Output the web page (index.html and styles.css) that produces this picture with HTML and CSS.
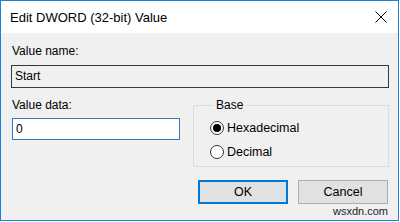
FILE: index.html
```html
<!DOCTYPE html>
<html>
<head>
    <meta charset="utf-8" />
    <title>Edit DWORD (32-bit) Value</title>
    <link rel="stylesheet" href="styles.css">
</head>
<body>
    <div class="window">
        <div class="titlebar">
            <span class="title">Edit DWORD (32-bit) Value</span>
            <svg class="close" width="12" height="12" viewBox="0 0 12 12">
                <path d="M0.5 0.5 L11.5 11.5 M11.5 0.5 L0.5 11.5" stroke="#000" stroke-width="1" fill="none" />
            </svg>
        </div>
        <div class="content">
            <div class="label">Value name:</div>
            <div class="name-field">Start</div>
            <div class="row">
                <div class="left">
                    <div class="label label2">Value data:</div>
                    <div class="data-field">0</div>
                </div>
                <fieldset class="base">
                    <legend>Base</legend>
                    <div class="radio-row">
                        <span class="radio checked"></span>
                        <span>Hexadecimal</span>
                    </div>
                    <div class="radio-row">
                        <span class="radio"></span>
                        <span>Decimal</span>
                    </div>
                </fieldset>
            </div>
            <div class="buttons">
                <div class="btn btn-ok">OK</div>
                <div class="btn">Cancel</div>
            </div>
            <div class="mark">wsxdn.com</div>
        </div>
    </div>
</body>
</html>
```

FILE: styles.css
```css
body {
    margin: 0;
    font-family: "Liberation Sans", Arial, sans-serif;
    font-size: 12px;
    color: #000;
    background: #fff;
}

.window {
    width: 399px;
    height: 221px;
    box-sizing: border-box;
    border: 1px solid #1883d7;
    display: flex;
    flex-direction: column;
    background: #f0f0f0;
}

.titlebar {
    height: 32px;
    background: #fff;
    display: flex;
    align-items: center;
    padding-left: 9px;
    padding-right: 11px;
}

.title {
    font-size: 13px;
    flex: 1;
}

.close {
    display: block;
}

.content {
    flex: 1;
    padding: 0 9px 0 10px;
}

.label {
    line-height: 15px;
    margin: 11px 0 0 1px;
}

.name-field {
    margin-top: 6px;
    height: 23px;
    box-sizing: border-box;
    border: 1px solid #3a3a3a;
    background: #f0f0f0;
    padding-left: 3px;
    line-height: 21px;
}

.row {
    display: grid;
    grid-template-columns: 182px 1fr;
}

.label2 {
    margin-top: 10px;
}

.data-field {
    margin: 5px 0 0 1px;
    width: 168px;
    height: 22px;
    box-sizing: border-box;
    border: 1px solid #2a7ac4;
    background: #fff;
    padding-left: 3px;
    line-height: 20px;
}

.base {
    margin: 10px 0 0 0;
    padding: 3px 0 0 16px;
    border: 1px solid #dcdcdc;
    height: 69px;
    box-sizing: border-box;
    min-width: 0;
}

.base legend {
    padding: 0 2px;
    margin-left: 4px;
    line-height: 15px;
}

.radio-row {
    display: flex;
    align-items: center;
    height: 24px;
    gap: 3px;
    font-size: 12.5px;
}

.radio {
    width: 14px;
    height: 14px;
    box-sizing: border-box;
    border: 1px solid #333;
    border-radius: 50%;
    background: #fff;
    position: relative;
}

.radio.checked::after {
    content: "";
    position: absolute;
    left: 2px;
    top: 2px;
    width: 8px;
    height: 8px;
    border-radius: 50%;
    background: #000;
}

.buttons {
    display: flex;
    justify-content: flex-end;
    gap: 10px;
    margin: 13px 1px 0 0;
}

.btn {
    width: 90px;
    height: 24px;
    box-sizing: border-box;
    border: 1px solid #adadad;
    background: #e1e1e1;
    text-align: center;
    line-height: 22px;
    font-size: 12.5px;
}

.btn-ok {
    border: 2px solid #0078d7;
    line-height: 20px;
}

.mark {
    text-align: right;
    font-size: 11px;
    line-height: 12px;
    margin: 1px 1px 0 0;
    color: #222;
}
```
